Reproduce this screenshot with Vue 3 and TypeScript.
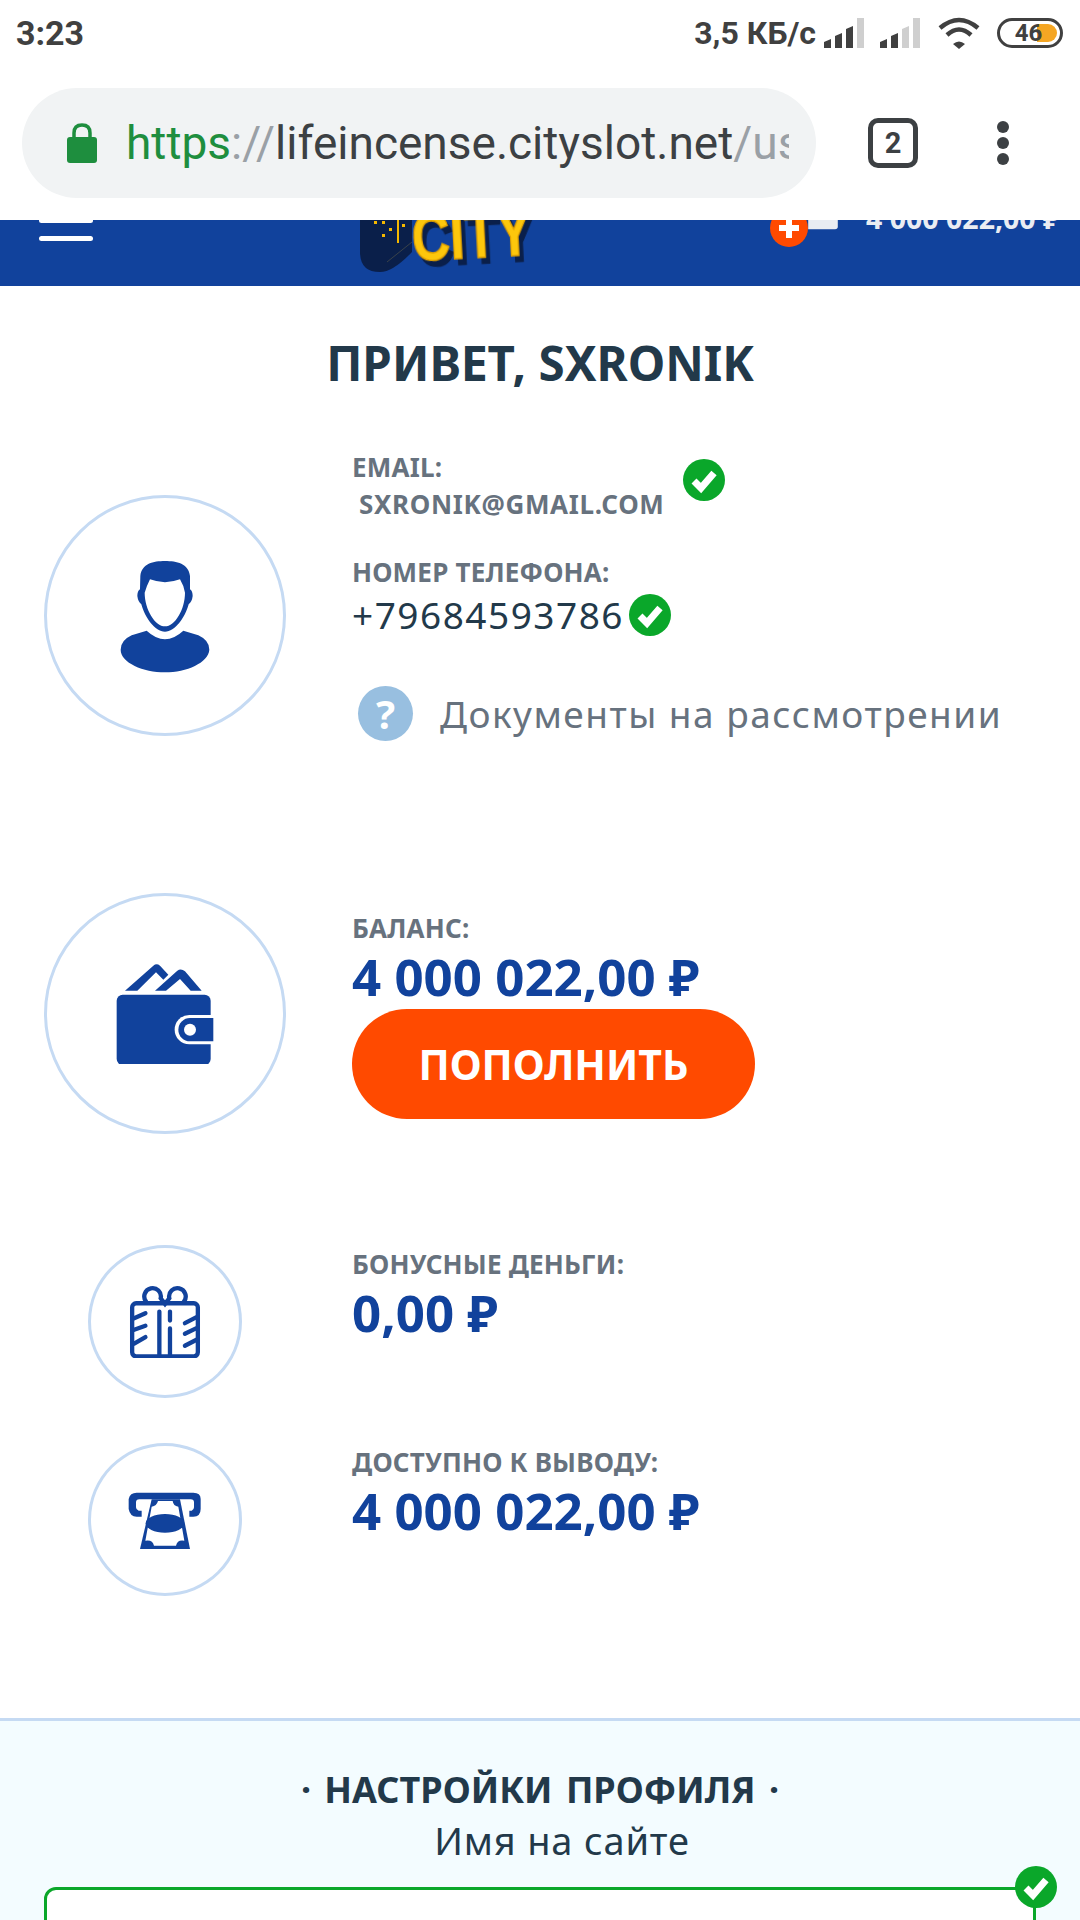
<template>
  <div class="screen">
    <div class="status">
      <span class="time">3:23</span>
      <div class="status-right">
        <span class="speed">3,5 КБ/с</span>
        <svg class="signal" viewBox="0 0 40 30">
          <path v-for="(h, i) in [6, 12, 19, 30]" :key="i" :d="barPath(i, h)" :fill="i < 3 ? '#404040' : '#cfcfcf'" />
        </svg>
        <svg class="signal second" viewBox="0 0 40 30">
          <path v-for="(h, i) in [6, 12, 19, 30]" :key="i" :d="barPath(i, h)" :fill="i < 2 ? '#404040' : '#cfcfcf'" />
        </svg>
        <svg class="wifi" viewBox="0 0 42 32" fill="none" stroke="#404040" stroke-width="4.5">
          <path d="M2 11 Q21 -5 40 11" />
          <path d="M9 18 Q21 7 33 18" />
          <path d="M21 32 L15 27 Q21 22 27 27 Z" fill="#404040" stroke="none" />
        </svg>
        <div class="battery">
          <div class="battery-fill"></div>
          <span>46</span>
        </div>
      </div>
    </div>

    <div class="toolbar">
      <div class="url-pill">
        <svg class="lock" viewBox="0 0 30 40">
          <path d="M7 17 V10 Q7 2 15 2 Q23 2 23 10 V17" fill="none" stroke="#1e8e3e" stroke-width="3.5" />
          <rect x="0" y="14" width="30" height="26" rx="3" fill="#1e8e3e" />
        </svg>
        <div class="url"><span class="scheme">https</span><span class="muted">://</span>lifeincense.cityslot.net<span class="muted">/user/profile</span></div>
      </div>
      <div class="tabs">2</div>
      <div class="dots"><i></i><i></i><i></i></div>
    </div>

    <header class="site-head">
      <div class="burger"><i></i><i></i><i></i></div>
      <svg class="logo" viewBox="0 0 170 100">
        <path d="M0 0 V80 Q0 100 20 100 Q33 100 52 80 V0 Z" fill="#0a1f4a" />
        <rect x="14" y="49" width="3" height="3" fill="#f5b800" />
        <rect x="22" y="49" width="3" height="3" fill="#f5b800" />
        <rect x="22" y="62" width="3" height="3" fill="#f5b800" />
        <rect x="29" y="56" width="3" height="3" fill="#f5b800" />
        <rect x="42" y="52" width="3" height="3" fill="#f5b800" />
        <rect x="37" y="46" width="2" height="25" fill="#f5b800" />
        <path d="M27 90 L52 70" stroke="#5a5a4a" stroke-width="0.6" />
        <text class="logo-text" x="53" y="89" textLength="120" lengthAdjust="spacingAndGlyphs" transform="rotate(-3 53 89)">CITY</text>
      </svg>
      <div class="head-wallet">
        <div class="plus"></div>
        <svg class="mini-wallet" viewBox="0 0 32 40">
          <path d="M0 0 H30 Q32 0 32 3 V34 Q32 37 29 37 H0 Z" fill="#e9ecf2" />
        </svg>
      </div>
      <div class="head-sum">4 000 022,00 ₽</div>
    </header>

    <main>
      <h1>ПРИВЕТ, SXRONIK</h1>

      <section class="row row-user">
        <div class="round big">
          <svg class="ic-user" viewBox="255 225 300 360">
            <path d="M405 240 C370 240 335 248 331 285 L330 325 Q322 330 322 345 Q324 362 334 370 C345 410 375 452 405 452 C435 452 465 410 476 370 Q486 362 488 345 Q488 330 480 325 L480 285 C476 248 440 240 405 240 Z" fill="#11429c" />
            <path d="M360 295 Q405 312 450 295 Q462 315 465 335 C465 385 435 436 405 436 C375 436 344 385 344 335 Q350 315 360 295 Z" fill="#fff" />
            <path d="M350 449 Q405 500 460 449 L505 463 Q538 478 538 506 C535 545 470 574 405 574 C340 574 272 545 272 506 Q272 478 305 463 Z" fill="#11429c" />
          </svg>
        </div>
        <div class="info">
          <div class="email-line">
            <div>
              <div class="label">EMAIL:</div>
              <div class="label email">SXRONIK@GMAIL.COM</div>
            </div>
            <svg class="check email-check" viewBox="0 0 42 42"><circle cx="21" cy="21" r="21" fill="#0aa72a" /><path d="M11 22 L18 29 L31 14" fill="none" stroke="#fff" stroke-width="7" /></svg>
          </div>
          <div class="label phone-label">НОМЕР ТЕЛЕФОНА:</div>
          <div class="phone-line">
            <span class="phone">+79684593786</span>
            <svg class="check" viewBox="0 0 42 42"><circle cx="21" cy="21" r="21" fill="#0aa72a" /><path d="M11 22 L18 29 L31 14" fill="none" stroke="#fff" stroke-width="7" /></svg>
          </div>
          <div class="docs">
            <span class="question">?</span>
            <span>Документы на рассмотрении</span>
          </div>
        </div>
      </section>

      <section class="row row-balance">
        <div class="round big">
          <svg class="ic-wallet" viewBox="255 250 300 300">
            <path d="M285 330 L370 255 Q380 247 390 255 L415 282 L400 297 L378 275 L322 330 Z" fill="#11429c" />
            <path d="M375 330 L442 270 Q453 262 465 272 L515 330 L482 330 L450 295 L408 330 Z" fill="#11429c" />
            <rect x="260" y="342" width="282" height="211" rx="18" fill="#11429c" />
            <path d="M552 403 H478 A44 44 0 0 0 478 491 H552 Z" fill="#fff" />
            <path d="M550 412 H480 A35 35 0 0 0 480 482 H550 Z" fill="#11429c" />
            <circle cx="480" cy="447" r="18" fill="#fff" />
          </svg>
        </div>
        <div class="info">
          <div class="label top">БАЛАНС:</div>
          <div class="sum">4 000 022,00 ₽</div>
          <button class="topup">ПОПОЛНИТЬ</button>
        </div>
      </section>

      <section class="row row-bonus">
        <div class="round small">
          <svg class="ic-gift" viewBox="165 165 240 220" fill="none" stroke="#11429c" stroke-linecap="round">
            <rect x="186" y="220" width="198" height="160" rx="12" stroke-width="13" />
            <path d="M228 215 A25 25 0 1 1 272 205 L285 222 L298 205 A25 25 0 1 1 342 215" stroke-width="13" />
            <path d="M268 245 V375 M300 245 V272 M300 296 V375" stroke-width="13" />
            <path d="M192 265 L226 250 M192 300 L226 288 M192 342 L226 322 M345 280 L380 262 M345 312 L380 295 M345 348 L380 330" stroke-width="13" />
          </svg>
        </div>
        <div class="info">
          <div class="label top">БОНУСНЫЕ ДЕНЬГИ:</div>
          <div class="sum">0,00 ₽</div>
        </div>
      </section>

      <section class="row row-withdraw">
        <div class="round small">
          <svg class="ic-atm" viewBox="165 160 240 216">
            <path d="M215 258 H200 Q180 258 176 235 V205 Q180 186 200 186 H370 Q392 186 392 205 V235 Q392 258 370 258 H358 V240 H365 Q372 238 372 230 V215 Q372 206 362 206 H208 Q198 206 198 215 V230 Q198 238 206 240 H215 Z" fill="#11429c" />
            <path d="M245 206 H330 L360 355 H210 Z" fill="#11429c" />
            <path d="M264 211 H308 Q310 226 325 228 L343 330 Q322 326 318 345 H252 Q248 326 226 330 L245 228 Q260 226 264 211 Z" fill="#fff" />
            <ellipse cx="285" cy="278" rx="58" ry="28" fill="#11429c" />
          </svg>
        </div>
        <div class="info">
          <div class="label top">ДОСТУПНО К ВЫВОДУ:</div>
          <div class="sum">4 000 022,00 ₽</div>
        </div>
      </section>

      <section class="settings">
        <h2>· НАСТРОЙКИ ПРОФИЛЯ ·</h2>
        <div class="field-name">Имя на сайте</div>
        <div class="field">
          <svg class="check field-check" viewBox="0 0 42 42"><circle cx="21" cy="21" r="21" fill="#0aa72a" /><path d="M11 22 L18 29 L31 14" fill="none" stroke="#fff" stroke-width="7" /></svg>
        </div>
      </section>
    </main>
  </div>
</template>

<script setup lang="ts">
// столбики сигнала в статус-баре
const barPath = (i: number, h: number): string => {
  const x = i * 11
  return `M${x} 30 V${30 - h} L${x + 7} ${30 - h - 3} V30 Z`
}
</script>

<style>
html, body { margin: 0; background: #fff; }
</style>

<style scoped>
.screen {
  width: 1080px; height: 1920px; overflow: hidden; background: #fff;
  font-family: "Noto Sans", "Open Sans", sans-serif; color: #22394a;
}
.status {
  height: 72px; display: flex; justify-content: space-between; align-items: center;
  padding: 0 17px 6px 16px; box-sizing: border-box;
  font-family: Roboto, sans-serif; font-weight: 700; color: #404040;
}
.time { font-size: 34px; }
.status-right { display: flex; align-items: center; }
.speed { font-size: 32px; margin-right: 8px; }
.signal { width: 40px; height: 30px; }
.signal.second { margin-left: 16px; }
.wifi { width: 42px; height: 32px; margin-left: 18px; }
.battery {
  position: relative; width: 60px; height: 24px; margin-left: 17px; border: 3px solid #404040;
  border-radius: 15px; display: flex; align-items: center; justify-content: center;
  font-size: 24px; overflow: hidden; box-sizing: content-box;
}
.battery span { position: relative; margin-right: 3px; }
.battery-fill { position: absolute; top: 3px; bottom: 3px; left: 37px; right: 3px; background: #f5a623; border-radius: 0 10px 10px 0; }

.toolbar { height: 148px; display: flex; padding: 16px 0 0 22px; box-sizing: border-box; }
.url-pill {
  width: 794px; height: 110px; background: #f1f3f4; border-radius: 55px; display: flex; align-items: center;
  padding-left: 45px; box-sizing: border-box; overflow: hidden;
}
.lock { width: 30px; height: 40px; flex: none; margin-right: 29px; }
.url { width: 663px; overflow: hidden; white-space: nowrap; font-family: Roboto, sans-serif; font-size: 46px; color: #3c4043; }
.scheme { color: #1e8e3e; }
.muted { color: #9aa0a6; }
.tabs {
  width: 50px; height: 50px; margin: 30px 0 0 52px; box-sizing: border-box; border: 5px solid #3c4043; border-radius: 10px;
  font: 700 29px/40px Roboto, sans-serif; text-align: center; color: #3c4043;
}
.dots { display: flex; flex-direction: column; gap: 4px; margin: 33px 0 0 79px; }
.dots i { width: 12px; height: 12px; border-radius: 50%; background: #3c4043; }

.site-head {
  height: 66px; background: #11429c; overflow: hidden;
  display: flex; align-items: flex-end;
}
.burger { display: flex; flex-direction: column; gap: 13px; margin: 0 0 45px 39px; width: 54px; flex: none; }
.burger i { height: 5px; background: #fff; border-radius: 3px; }
.logo { width: 170px; height: 100px; flex: none; margin: 0 0 14px 267px; overflow: visible; }
.logo-text {
  font: 700 66px "Liberation Sans", sans-serif; fill: #fdc70c;
  stroke: #e0a000; stroke-width: 1.5; filter: drop-shadow(4px 6px 0 #0a1f4a);
}
.head-wallet { display: flex; align-items: flex-end; margin: 0 0 39px 240px; flex: none; }
.plus {
  width: 38px; height: 38px; border-radius: 50%; background: #ff4a00; z-index: 1; flex: none;
  background-image: linear-gradient(#fff, #fff), linear-gradient(#fff, #fff);
  background-size: 20px 6px, 6px 20px; background-position: center; background-repeat: no-repeat;
}
.mini-wallet { width: 30px; height: 37px; margin: 0 0 15px 0; flex: none; }
.head-sum { font: 700 28.5px/34px "Noto Sans", sans-serif; color: #e9ecf2; margin: 0 0 51px 28px; white-space: nowrap; }

h1 { margin: 50px 0 0; text-align: center; font-size: 47.5px; line-height: 54px; font-weight: 700; }

.row { display: grid; grid-template-columns: 352px 1fr; }
.row-user { margin-top: 60px; }
.row-balance { margin-top: 152px; }
.row-bonus { margin-top: 111px; }
.row-withdraw { margin-top: 45px; }
.round {
  box-sizing: border-box; border: 3px solid #c5daf3; border-radius: 50%;
  display: flex; align-items: center; justify-content: center;
}
.big { width: 242px; height: 241px; margin-left: 44px; }
.small { width: 154px; height: 153px; margin-left: 88px; }
.row-user .round { margin-top: 45px; }
.ic-user { width: 100px; height: 120px; }
.ic-wallet { width: 100px; height: 100px; }
.ic-gift { width: 80px; height: 73px; }
.ic-atm { width: 80px; height: 72px; }

.label { font-size: 26px; line-height: 34px; font-weight: 700; color: #67727e; white-space: nowrap; letter-spacing: 0.2px; }
.top { margin-top: 2px; }
.row-balance .top { margin-top: 18px; }
.email-line { display: flex; align-items: flex-start; }
.email { margin-left: 7px; line-height: 36px; margin-top: 2px; letter-spacing: 0.65px; }
.email-check { margin: 9px 0 0 18px; }
.check { width: 42px; height: 42px; flex: none; }
.phone-label { margin-top: 33px; }
.phone-line { display: flex; align-items: center; margin-top: 5px; height: 42px; }
.phone { font-size: 37px; line-height: 42px; margin-right: 5px; color: #22394a; letter-spacing: 1.5px; }
.docs { display: flex; align-items: center; margin-top: 50px; margin-left: 6px; font-size: 37px; line-height: 55px; color: #67727e; white-space: nowrap; letter-spacing: 1.5px; }
.question {
  width: 55px; height: 55px; border-radius: 50%; background: #98bfe0; color: #fff; text-align: center;
  font-weight: 700; font-size: 40px; margin-right: 27px; flex: none; letter-spacing: 0;
}
.sum { font-size: 51px; line-height: 56px; font-weight: 700; color: #11429c; margin-top: 3px; white-space: nowrap; }
.topup {
  display: block; width: 403px; height: 110px; margin-top: 5px; border: 0; border-radius: 55px; background: #ff4a00;
  color: #fff; font: 700 41px "Noto Sans", sans-serif; padding: 0;
}

.settings { margin-top: 122px; border-top: 3px solid #c5daf3; background: #f3fcff; padding-top: 42px; height: 400px; }
h2 { margin: 0; text-align: center; font-size: 36px; line-height: 54px; font-weight: 700; word-spacing: 4px; }
.field-name { text-align: center; padding-left: 44px; font-size: 38px; line-height: 40px; margin-top: 3px; letter-spacing: 0.8px; }
.field { position: relative; margin: 27px 44px 0; height: 200px; box-sizing: border-box; border: 3px solid #0aa72a; border-radius: 12px; background: #fff; }
.field-check { position: absolute; top: -24px; right: -24px; }
</style>
